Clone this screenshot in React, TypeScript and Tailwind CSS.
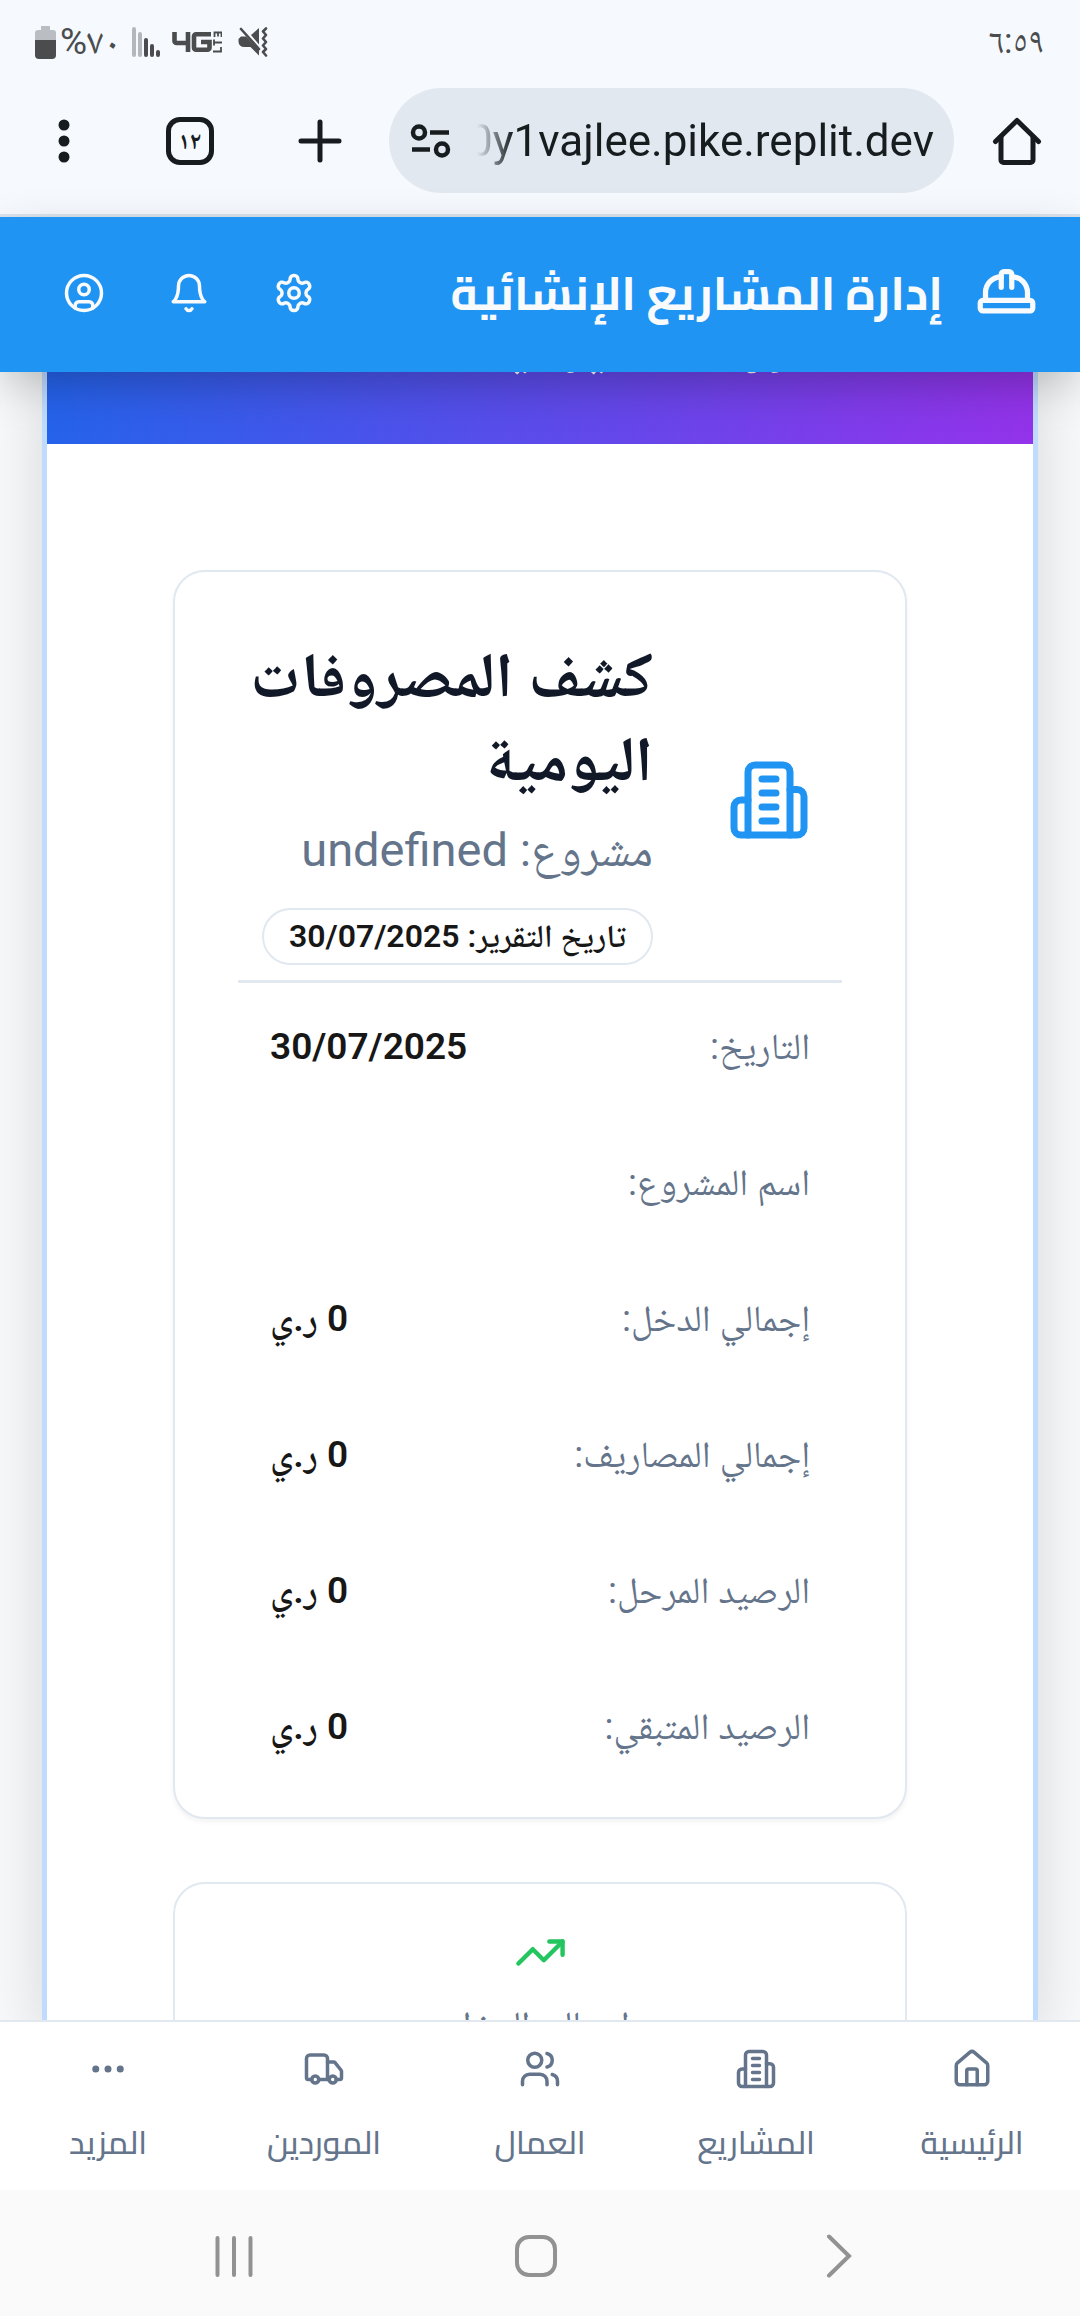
import type { ReactNode } from 'react';
import { CircleUser, Ellipsis, House, TrendingUp, Truck, Users } from 'lucide-react';

const bodyFont = "font-[Roboto,'Noto_Naskh_Arabic',sans-serif]";

type IconProps = { size?: number; className?: string };

function StrokeIcon({ size = 42, className, children }: IconProps & { children: ReactNode }) {
  return (
    <svg
      width={size}
      height={size}
      viewBox="0 0 24 24"
      fill="none"
      stroke="currentColor"
      strokeWidth="2"
      strokeLinecap="round"
      strokeLinejoin="round"
      aria-hidden="true"
      className={className}
    >
      {children}
    </svg>
  );
}

function BuildingIcon(props: IconProps) {
  return (
    <StrokeIcon {...props}>
      <path d="M6 22V4a2 2 0 0 1 2-2h8a2 2 0 0 1 2 2v18Z" />
      <path d="M6 12H4a2 2 0 0 0-2 2v6a2 2 0 0 0 2 2h2" />
      <path d="M18 9h2a2 2 0 0 1 2 2v9a2 2 0 0 1-2 2h-2" />
      <path d="M10 6h4M10 10h4M10 14h4M10 18h4" />
    </StrokeIcon>
  );
}

function BellIcon(props: IconProps) {
  return (
    <StrokeIcon {...props}>
      <path d="M6 8a6 6 0 0 1 12 0c0 7 3 9 3 9H3s3-2 3-9" />
      <path d="M10.3 21a1.94 1.94 0 0 0 3.4 0" />
    </StrokeIcon>
  );
}

function HardHatIcon(props: IconProps) {
  return (
    <StrokeIcon {...props}>
      <path d="M2 18a1 1 0 0 0 1 1h18a1 1 0 0 0 1-1v-2a1 1 0 0 0-1-1H3a1 1 0 0 0-1 1v2z" />
      <path d="M10 10V5a1 1 0 0 1 1-1h2a1 1 0 0 1 1 1v5" />
      <path d="M4 15v-3a6 6 0 0 1 6-6" />
      <path d="M14 6a6 6 0 0 1 6 6v3" />
    </StrokeIcon>
  );
}

function GearIcon(props: IconProps) {
  return (
    <StrokeIcon {...props}>
      <path d="M12.22 2h-.44a2 2 0 0 0-2 2v.18a2 2 0 0 1-1 1.73l-.43.25a2 2 0 0 1-2 0l-.15-.08a2 2 0 0 0-2.73.73l-.22.38a2 2 0 0 0 .73 2.73l.15.1a2 2 0 0 1 1 1.72v.51a2 2 0 0 1-1 1.74l-.15.09a2 2 0 0 0-.73 2.73l.22.38a2 2 0 0 0 2.73.73l.15-.08a2 2 0 0 1 2 0l.43.25a2 2 0 0 1 1 1.73V20a2 2 0 0 0 2 2h.44a2 2 0 0 0 2-2v-.18a2 2 0 0 1 1-1.73l.43-.25a2 2 0 0 1 2 0l.15.08a2 2 0 0 0 2.73-.73l.22-.39a2 2 0 0 0-.73-2.73l-.15-.08a2 2 0 0 1-1-1.74v-.5a2 2 0 0 1 1-1.74l.15-.09a2 2 0 0 0 .73-2.73l-.22-.38a2 2 0 0 0-2.73-.73l-.15.08a2 2 0 0 1-2 0l-.43-.25a2 2 0 0 1-1-1.73V4a2 2 0 0 0-2-2z" />
      <circle cx="12" cy="12" r="3" />
    </StrokeIcon>
  );
}

function StatusBar() {
  return (
    <div dir="ltr" className="flex h-20 shrink-0 items-center justify-between pt-1 pr-9 pl-[35px] text-[#4a4c4d]">
      <div className="flex items-center">
        <svg width="21" height="34" viewBox="0 0 21 34" aria-hidden="true">
          <path d="M6 1h9v4h3a3 3 0 0 1 3 3v7H0V8a3 3 0 0 1 3-3h3z" fill="#babec3" />
          <path d="M0 15h21v15a4 4 0 0 1-4 4H4a4 4 0 0 1-4-4z" fill="#4a4c4d" />
        </svg>
        <span className="ml-1 text-[37px] leading-10">%٧٠</span>
        <svg className="ml-3" width="28" height="30" viewBox="0 0 28 30" aria-hidden="true">
          <g strokeWidth="4" strokeLinecap="round">
            <path d="M2 2v26M8 7v21" stroke="#b4b8bc" />
            <path d="M14 13v15M20 19v9M26 25v3" stroke="#4a4c4d" />
          </g>
        </svg>
        <svg className="ml-3" width="50" height="22" viewBox="0 0 50 22" fill="none" stroke="#4a4c4d" aria-hidden="true">
          <path d="M2.5 1v9a2 2 0 0 0 2 2H18M16 1v20" strokeWidth="4.6" />
          <path d="M39 3.3H24a2 2 0 0 0-2 2v11.4a2 2 0 0 0 2 2h11.5a2 2 0 0 0 2-2V11H29" strokeWidth="4.6" />
          <path d="M49 16v4.500h-8M42 14.500V8.500M42 11.500h8M42.500 6V1.500h7V6M46 5.500v-4" strokeWidth="1.800" />
        </svg>
        <svg className="ml-4" width="30" height="30" viewBox="0 0 30 30" aria-hidden="true">
          <path d="M3 9.500h5l13 13V28.500l-8.500-8.500H6a5.500 5.500 0 0 1-5.500-5.500V12z" fill="#4a4c4d" />
          <path d="M21 1v16.500L13 8z" fill="#4a4c4d" />
          <path d="M3 2l18 20" stroke="#4a4c4d" strokeWidth="2.600" strokeLinecap="round" />
          <path d="M28 1.500l-3 3 3 3.500-3 3.500 3 3.500-3 3.500 3 3.500-3 3 3 3.500" fill="none" stroke="#4a4c4d" strokeWidth="2.600" strokeLinecap="round" strokeLinejoin="round" />
        </svg>
      </div>
      <time className="text-[35px] leading-10">٦:٥٩</time>
    </div>
  );
}

function AddressBar() {
  return (
    <div dir="ltr" className="flex h-[137px] shrink-0 items-start border-b-3 border-[#dbe3ec] pt-2 pr-9 pl-10 text-[#171c1f]">
      <button aria-label="المزيد من الخيارات" className="flex h-[105px] w-12 items-center justify-center">
        <svg width="12" height="44" viewBox="0 0 12 44" fill="currentColor" aria-hidden="true">
          <circle cx="6" cy="6" r="5.500" />
          <circle cx="6" cy="22" r="5.500" />
          <circle cx="6" cy="38" r="5.500" />
        </svg>
      </button>
      <button
        aria-label="علامات التبويب"
        className="mt-[29px] ml-[78px] flex size-12 items-center justify-center rounded-[14px] border-5 border-current text-2xl leading-6 font-bold"
      >
        ١٢
      </button>
      <button aria-label="علامة تبويب جديدة" className="ml-[82px] flex h-[105px] w-12 items-center justify-center">
        <svg width="44" height="44" viewBox="0 0 44 44" stroke="currentColor" strokeWidth="5" strokeLinecap="round" aria-hidden="true">
          <path d="M22 3v38M3 22h38" />
        </svg>
      </button>
      <div className="ml-[45px] flex h-[105px] min-w-0 flex-1 items-center rounded-full bg-[#e2e8f0] pr-5 pl-5">
        <svg className="shrink-0" width="42" height="36" viewBox="0 0 42 36" fill="none" stroke="currentColor" strokeWidth="4.500" aria-hidden="true">
          <circle cx="10" cy="9.500" r="6" />
          <path d="M21 9.500h19M3 26.500h18" />
          <circle cx="33" cy="26.500" r="6" />
        </svg>
        <div className="ml-3 flex min-w-0 flex-1 justify-end overflow-hidden mask-[linear-gradient(to_right,transparent_0,transparent_14px,black_50px)]">
          <span className="font-[Roboto,sans-serif] text-[44px] leading-[60px] whitespace-nowrap">0y1vajlee.pike.replit.dev</span>
        </div>
      </div>
      <button aria-label="الصفحة الرئيسية" className="ml-9 flex h-[105px] w-[54px] items-center justify-center">
        <svg width="50" height="50" viewBox="0 0 50 50" fill="none" stroke="currentColor" strokeWidth="5" strokeLinecap="round" strokeLinejoin="round" aria-hidden="true">
          <path d="M3.500 25.500 25 4.500l21.500 21" />
          <path d="M9 21v23a2.500 2.500 0 0 0 2.500 2.500h27A2.500 2.500 0 0 0 41 44V21" />
        </svg>
      </button>
    </div>
  );
}

function HeaderButton({ label, children }: { label: string; children: ReactNode }) {
  return (
    <button aria-label={label} className="flex size-[105px] items-center justify-center">
      {children}
    </button>
  );
}

function AppHeader() {
  return (
    <header className="relative z-10 flex h-[155px] shrink-0 items-center justify-between bg-[#2094f3] pr-[42px] pb-1 pl-[31px] text-[#f8fafc] shadow-[0_16px_48px_-6px_rgba(0,0,0,0.28)]">
      <div className="flex items-center gap-8">
        <HardHatIcon size={63} />
        <h1 className="font-[Cairo,sans-serif] text-[47px] leading-[74px] font-bold">إدارة المشاريع الإنشائية</h1>
      </div>
      <div className="flex items-center">
        <HeaderButton label="الإعدادات">
          <GearIcon />
        </HeaderButton>
        <HeaderButton label="الإشعارات">
          <BellIcon />
        </HeaderButton>
        <HeaderButton label="الحساب">
          <CircleUser size={42} />
        </HeaderButton>
      </div>
    </header>
  );
}

const rows = [
  { label: 'التاريخ:', value: '30/07/2025' },
  { label: 'اسم المشروع:', value: '' },
  { label: 'إجمالي الدخل:', value: '0 ر.ي' },
  { label: 'إجمالي المصاريف:', value: '0 ر.ي' },
  { label: 'الرصيد المرحل:', value: '0 ر.ي' },
  { label: 'الرصيد المتبقي:', value: '0 ر.ي' },
];

function ReportCard() {
  return (
    <section className="rounded-[32px] border-2 border-slate-200 bg-white px-[63px] pt-[62px] pb-[18px] shadow-[0_3px_5px_rgba(0,0,0,0.05)]">
      <div className="flex items-center gap-[74px] border-b-3 border-slate-200 pr-[31px] pb-[15px]">
        <BuildingIcon size={84} className="shrink-0 text-[#2094f3]" />
        <div className="min-w-0 flex-1">
          <h2 className="text-[63px] leading-[84px] font-bold text-[#111827]">كشف المصروفات اليومية</h2>
          <p className="mt-1.5 text-[47px] leading-[84px] text-[#64748b]">مشروع: undefined</p>
          <span className="mt-4 inline-block rounded-full border-2 border-slate-200 px-[25px] text-[32px] leading-[53px] font-semibold text-neutral-900">
            تاريخ التقرير: 30/07/2025
          </span>
        </div>
      </div>
      <dl className="px-[32px]">
        {rows.map((row) => (
          <div key={row.label} className="flex h-[136px] items-center justify-between pb-2">
            <dt className="text-[37px] leading-[52px] text-[#64748b]">{row.label}</dt>
            <dd className="text-[37px] leading-[52px] font-semibold text-neutral-900">{row.value}</dd>
          </div>
        ))}
      </dl>
    </section>
  );
}

function TotalCard() {
  return (
    <section className="flex flex-col items-center rounded-[32px] border-2 border-slate-200 bg-white pt-[42px] text-[37px] leading-[52px] text-[#64748b]">
      <TrendingUp size={53} className="text-[#22c55e]" />
      <p className="mt-5">إجمالي الدخل</p>
    </section>
  );
}

function ReportPage() {
  return (
    <main className="min-h-0 flex-1 overflow-hidden bg-slate-50 px-[42px]">
      <div className="min-h-full border-x-5 border-[#bfdbfe] bg-white shadow-[0_0_70px_-8px_rgba(0,0,0,0.18)]">
        <div className="h-[72px] overflow-hidden bg-[linear-gradient(to_left,#9333ea,#2563eb)] pr-[140px]">
          <p className="-mt-[72px] text-[58px] leading-[84px] font-bold text-white">المصروفات اليومية</p>
        </div>
        <div className="flex flex-col gap-[63px] px-[126px] pt-[126px]">
          <ReportCard />
          <TotalCard />
        </div>
      </div>
    </main>
  );
}

const tabs = [
  { label: 'الرئيسية', icon: House },
  { label: 'المشاريع', icon: BuildingIcon },
  { label: 'العمال', icon: Users },
  { label: 'الموردين', icon: Truck },
  { label: 'المزيد', icon: Ellipsis },
];

function TabBar() {
  return (
    <nav className="grid h-[170px] shrink-0 grid-cols-5 border-t-2 border-slate-200 bg-white font-[Cairo,sans-serif] text-[#64748b]">
      {tabs.map(({ label, icon: Icon }) => (
        <a key={label} href="#" className="flex flex-col items-center gap-[31px] pt-[26px]">
          <Icon size={42} />
          <span className="text-[32px] leading-[42px] font-medium">{label}</span>
        </a>
      ))}
    </nav>
  );
}

function SystemBar() {
  return (
    <div dir="ltr" className="flex h-[126px] shrink-0 items-center bg-[#fafafa] pt-1.5 pr-[90px] pl-[83px] text-[#929292]">
      <button aria-label="التطبيقات الأخيرة" className="flex h-full flex-1 items-center justify-center">
        <svg width="40" height="42" viewBox="0 0 40 42" stroke="currentColor" strokeWidth="4" strokeLinecap="round" aria-hidden="true">
          <path d="M3.500 3v37M20 3v37M36.500 3v37" />
        </svg>
      </button>
      <button aria-label="الشاشة الرئيسية" className="flex h-full flex-1 items-center justify-center">
        <svg width="42" height="42" viewBox="0 0 42 42" fill="none" stroke="currentColor" strokeWidth="4" aria-hidden="true">
          <rect x="2" y="2" width="38" height="38" rx="12" />
        </svg>
      </button>
      <button aria-label="رجوع" className="flex h-full flex-1 items-center justify-center">
        <svg width="26" height="44" viewBox="0 0 26 44" fill="none" stroke="currentColor" strokeWidth="4" strokeLinecap="round" aria-hidden="true">
          <path d="M3 2.500 23 22 3 41.500" />
        </svg>
      </button>
    </div>
  );
}

export default function App() {
  return (
    <div dir="rtl" lang="ar" className={`flex h-screen flex-col bg-[#f6f9fe] ${bodyFont}`}>
      <StatusBar />
      <AddressBar />
      <AppHeader />
      <ReportPage />
      <TabBar />
      <SystemBar />
    </div>
  );
}
